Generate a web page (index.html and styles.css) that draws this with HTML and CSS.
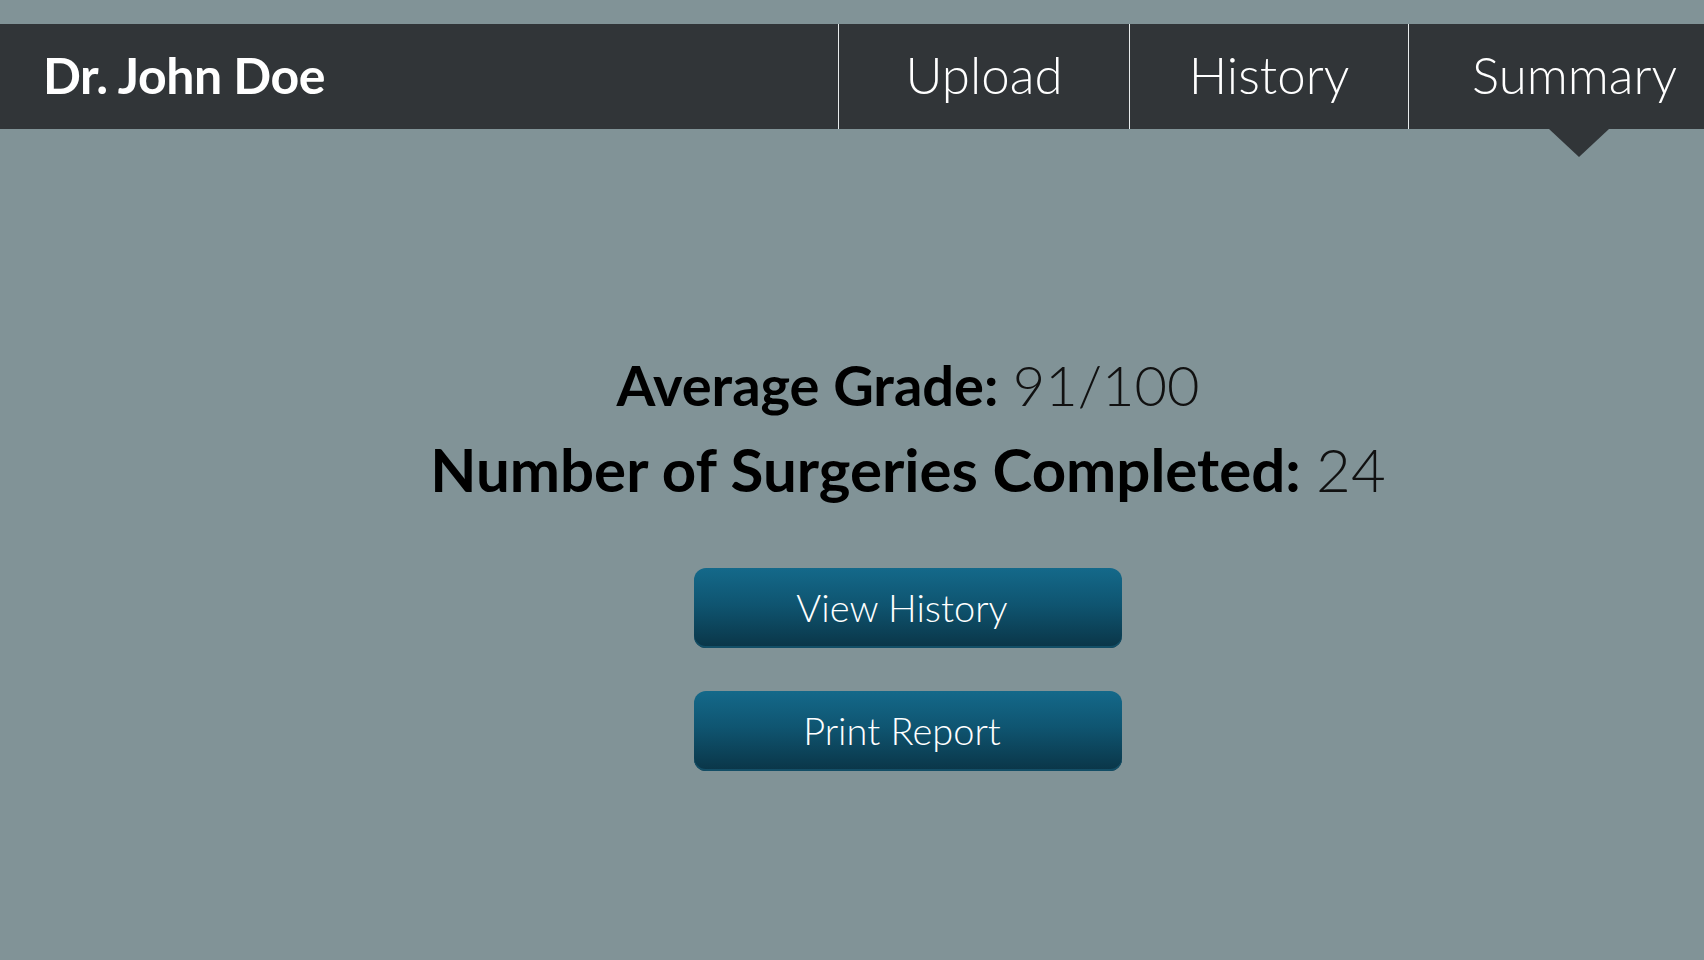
FILE: index.html
```html
<!DOCTYPE html>
<html lang="en">
<head>
<meta charset="utf-8">
<title>Summary - Dr. John Doe</title>
<link rel="stylesheet" href="styles.css">
</head>
<body>
<header class="topbar">
  <div class="brand">Dr. John Doe</div>
  <nav class="nav">
    <a class="nav-item nav-upload" href="#">Upload</a>
    <a class="nav-item nav-history" href="#">History</a>
    <a class="nav-item nav-summary active" href="#">Summary</a>
  </nav>
</header>
<main class="summary">
  <p class="stat stat-grade"><span class="stat-label">Average Grade:</span> <span class="stat-value">91/100</span></p>
  <p class="stat stat-count"><span class="stat-label">Number of Surgeries Completed:</span> <span class="stat-value">24</span></p>
  <div class="actions">
    <button class="btn" type="button">View History</button>
    <button class="btn" type="button">Print Report</button>
  </div>
</main>
</body>
</html>
```

FILE: styles.css
```css
html, body {
  margin: 0;
  padding: 0;
}

body {
  background: #819397;
  font-family: Lato, "Open Sans", "Liberation Sans", sans-serif;
  height: 960px;
  overflow: hidden;
  padding-top: 24px;
  box-sizing: border-box;
}

.topbar {
  display: flex;
  align-items: stretch;
  height: 105px;
  background: #313538;
  color: #ffffff;
}

.brand {
  flex: 1;
  display: flex;
  align-items: center;
  padding-left: 43px;
  font-weight: 700;
  font-size: 50px;
  letter-spacing: -0.5px;
  padding-bottom: 3px;
}

.nav {
  display: flex;
  width: 866px;
}

.nav-item {
  position: relative;
  display: flex;
  align-items: center;
  justify-content: center;
  color: #ffffff;
  text-decoration: none;
  font-weight: 300;
  font-size: 51px;
  padding-bottom: 4px;
  box-sizing: border-box;
  border-left: 1px solid #e8ecec;
}

.nav-upload {
  width: 291px;
}

.nav-history {
  width: 279px;
}

.nav-summary {
  flex: 1;
  justify-content: flex-start;
  padding-left: 63px;
}

.nav-item.active::after {
  content: "";
  position: absolute;
  top: 100%;
  left: 140px;
  width: 0;
  height: 0;
  border-left: 30px solid transparent;
  border-right: 30px solid transparent;
  border-top: 28px solid #313538;
}

.summary {
  display: flex;
  flex-direction: column;
  align-items: center;
  padding-top: 214px;
  padding-left: 112px;
}

.stat {
  margin: 0;
  font-size: 56px;
  line-height: 84px;
  color: #000000;
  white-space: nowrap;
}

.stat-count {
  font-size: 60px;
}

.stat-label {
  font-weight: 700;
}

.stat-value {
  font-weight: 300;
  color: #111111;
}

.actions {
  display: flex;
  flex-direction: column;
  gap: 43px;
  margin-top: 57px;
}

.btn {
  width: 428px;
  height: 80px;
  border: none;
  border-radius: 12px;
  background: linear-gradient(to bottom, #14698a 0%, #0f5571 45%, #0a3547 100%);
  box-shadow: inset 0 -2px 0 #134e66;
  color: #ffffff;
  font-family: Lato, "Open Sans", "Liberation Sans", sans-serif;
  font-weight: 300;
  font-size: 38px;
  padding: 0 12px 2px 0;
  cursor: pointer;
}
```
